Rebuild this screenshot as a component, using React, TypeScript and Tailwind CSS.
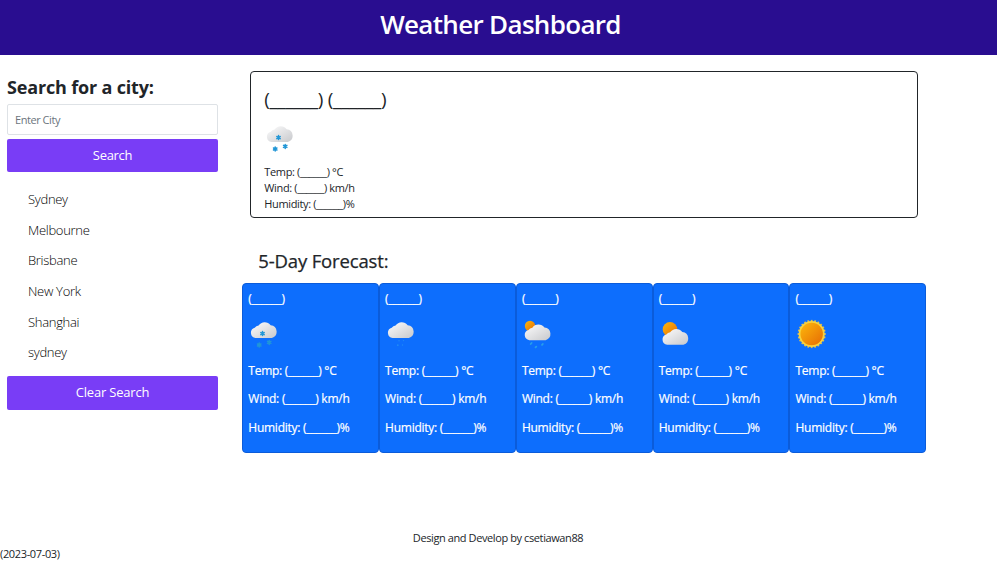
import React from "react";

type Kind = "snow" | "drizzle" | "sunRain" | "partly" | "sun";

const cloudPath =
  "M7.5 22.5 A5.6 5.6 0 0 1 6.6 11.6 A5.2 5.2 0 0 1 10.6 9.2 A7.6 7.6 0 0 1 23.2 9 A6.9 6.9 0 0 1 24.4 22.5 Z";

function Flake({ x, y }: { x: number; y: number }) {
  return (
    <g stroke="#2196d6" strokeWidth="1.5" strokeLinecap="round">
      <path d={`M${x} ${y - 2}v4M${x - 1.7} ${y - 1}l3.4 2M${x - 1.7} ${y + 1}l3.4 -2`} />
    </g>
  );
}

function WeatherIcon({ kind, id }: { kind: Kind; id: string }) {
  const cloud = `url(#cloud-${id})`;
  const sun = `url(#sun-${id})`;
  const rays = Array.from({ length: 24 }, (_, i) => i * 15);
  return (
    <svg width="32" height="32" viewBox="0 0 32 32" fill="none" className="block">
      <defs>
        <linearGradient id={`cloud-${id}`} x1="10" y1="6" x2="21" y2="24" gradientUnits="userSpaceOnUse">
          <stop stopColor="#f5f5f6" />
          <stop offset="1" stopColor="#cdced1" />
        </linearGradient>
        <linearGradient id={`sun-${id}`} x1="0" y1="0" x2="1" y2="1">
          <stop stopColor="#fcb80c" />
          <stop offset="1" stopColor="#e66b04" />
        </linearGradient>
      </defs>
      {kind === "snow" && (
        <>
          <path d={cloudPath} transform="translate(.4 -1.1) scale(.96 .94)" fill={cloud} />
          <Flake x={14.5} y={15.6} />
          <Flake x={11.2} y={27} />
          <Flake x={21.2} y={24.4} />
        </>
      )}
      {kind === "drizzle" && (
        <>
          <path d={cloudPath} transform="translate(.4 -1.1) scale(.96 .94)" fill={cloud} />
          <g fill="#218af5">
            <circle cx="14" cy="22.8" r=".7" />
            <circle cx="18.5" cy="22.6" r=".7" />
            <circle cx="12.8" cy="27.2" r=".9" />
            <circle cx="17.5" cy="27" r=".7" />
          </g>
        </>
      )}
      {kind === "sunRain" && (
        <>
          <circle cx="8" cy="8" r="5.2" fill={sun} />
          <path d={cloudPath} transform="translate(.2 1) scale(.96 .94)" fill={cloud} />
          <g stroke="#279fe9" strokeWidth="1.8" strokeLinecap="round">
            <path d="M9.6 25l-.9 1M14.3 28.6l-.8.8M20.8 26l-.8.9" />
          </g>
        </>
      )}
      {kind === "partly" && (
        <>
          <circle cx="11" cy="11.4" r="7.3" fill={sun} />
          <path d={cloudPath} transform="translate(1 5.6) scale(.96 .94)" fill={cloud} />
        </>
      )}
      {kind === "sun" && (
        <g transform="translate(.7 0)">
          <g stroke="#d9bd55" strokeWidth="1.8">
            {rays.map((r) => (
              <path key={r} d="M16 1.9v3" transform={`rotate(${r} 16 16)`} />
            ))}
          </g>
          <circle cx="16" cy="16" r="13" fill="#f7d23e" />
          <circle cx="16" cy="16" r="11.2" fill={sun} />
        </g>
      )}
    </svg>
  );
}

const cities = ["Sydney", "Melbourne", "Brisbane", "New York", "Shanghai", "sydney"];
const days: Kind[] = ["snow", "drizzle", "sunRain", "partly", "sun"];

export default function App() {
  return (
    <div className="flex h-[565px] w-[997px] flex-col overflow-hidden bg-white font-['Open_Sans','Noto_Sans',sans-serif] text-[#212529]">
      <header className="flex h-[55px] shrink-0 justify-center bg-[#290d90] pl-1">
        <h1 className="text-[26px] leading-[49px] font-semibold tracking-[-0.68px] text-white">Weather Dashboard</h1>
      </header>

      <div className="flex h-[475px] shrink-0">
        <aside className="flex w-[242.3px] shrink-0 flex-col pt-[20px] pr-[24.3px] pl-[7px]">
          <h2 className="h-[29px] text-[18px] leading-[24px] font-bold tracking-[-0.17px] whitespace-nowrap">Search for a city:</h2>
          <input
            type="text"
            placeholder="Enter City"
            className="h-[31px] w-full rounded-[2px] border border-[#dee2e6] px-[7px] text-[11px] tracking-[-0.45px] placeholder:text-[#6c757d]"
          />
          <button className="mt-1 h-[33px] rounded-[2px] bg-[#793df6] text-[13px] tracking-[-0.3px] text-white">Search</button>
          <ul className="mt-[12px] mb-[8px] pl-[21px]">
            {cities.map((c) => (
              <li key={c} className="h-[30.66px] text-[13px] leading-[30.66px] font-light tracking-[-0.3px] text-black">
                {c}
              </li>
            ))}
          </ul>
          <button className="h-[34px] rounded-[2px] bg-[#793df6] text-[13px] tracking-[-0.2px] text-white">Clear Search</button>
        </aside>

        <main className="w-[684px] shrink-0 pt-4">
          <section className="mx-2 h-[147px] rounded-[4px] border border-[#212529] px-[13px] pt-[14px]">
            <h3 className="h-[36px] text-[19px] leading-[27px] tracking-[-0.3px]">(______) (______)</h3>
            <WeatherIcon kind="snow" id="today" />
            <div className="mt-[10px] text-[11px] leading-4 tracking-[-0.36px]">
              <p>Temp: (______) °C</p>
              <p>Wind: (______) km/h</p>
              <p>Humidity: (______)%</p>
            </div>
          </section>

          <h3 className="mt-[30px] h-[35px] pl-4 text-[18.5px] leading-[26px] tracking-[-0.15px] [-webkit-text-stroke:0.25px_#212529]">
            5-Day Forecast:
          </h3>
          <div className="grid h-[170px] grid-cols-5">
            {days.map((d, i) => (
              <article
                key={d}
                className="rounded-[4px] border border-[#0b5cda] bg-[#0d6efd] pt-[7px] pl-[5px] text-[12px] leading-4 tracking-[-0.25px] text-white [-webkit-text-stroke:0.2px_#fff]"
              >
                <p>(______)</p>
                <div className="mt-[11px] h-[45px]">
                  <WeatherIcon kind={d} id={`day-${i}`} />
                </div>
                <p className="h-7">Temp: (______) °C</p>
                <p className="h-[29px]">Wind: (______) km/h</p>
                <p>Humidity: (______)%</p>
              </article>
            ))}
          </div>
        </main>
      </div>

      <footer className="text-[11px] leading-4">
        <p className="pr-[1px] text-center tracking-[-0.4px]">Design and Develop by csetiawan88</p>
        <p className="tracking-[-0.35px]">(2023-07-03)</p>
      </footer>
    </div>
  );
}
